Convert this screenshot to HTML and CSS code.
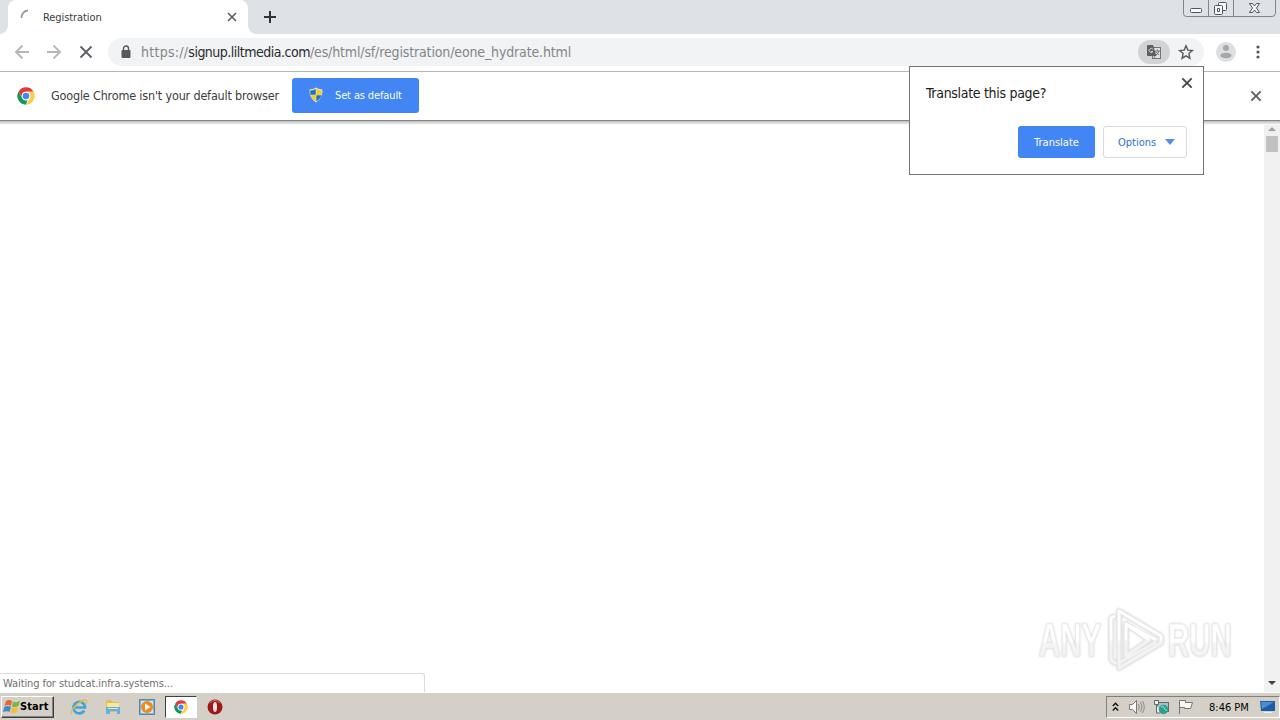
FILE: index.html
```html
<!DOCTYPE html>
<html lang="en">
<head>
<meta charset="utf-8">
<title>Registration</title>
<link rel="stylesheet" href="styles.css">
</head>
<body>
<svg class="defs" width="0" height="0" aria-hidden="true">
  <symbol id="cross" viewBox="0 0 12 12"><path d="M2 2l8 8M10 2l-8 8" fill="none" stroke="currentColor" stroke-width="1.6"/></symbol>
  <symbol id="chrome" viewBox="0 0 48 48">
    <circle cx="24" cy="24" r="23" fill="#fff"/>
    <path d="M4 12.500A23 23 0 0 1 44 12.500H24A11.500 11.500 0 0 0 14 29.700Z" fill="#de3d32"/>
    <path d="M4 12.500L14 29.700A11.500 11.500 0 0 0 28 34.800L24 47A23 23 0 0 1 4 12.500Z" fill="#15965a"/>
    <path d="M44 12.500A23 23 0 0 1 24 47L34 29.700A11.500 11.500 0 0 0 24 12.500Z" fill="#fccd48"/>
    <circle cx="24" cy="24" r="11.500" fill="#fff"/><circle cx="24" cy="24" r="8.800" fill="#4285f4"/>
  </symbol>
</svg>
<div class="screen">
  <header class="tabstrip">
    <div class="tab">
      <svg class="spinner" width="16" height="16" viewBox="0 0 16 16"><path d="M1.500 9A7 7 0 0 1 8 1.500" fill="none" stroke="#999" stroke-width="1.800"/></svg>
      <span class="tab-title">Registration</span>
      <svg class="tab-close" width="12" height="12"><use href="#cross"/></svg>
    </div>
    <svg class="plus" width="14" height="14" viewBox="0 0 14 14"><path d="M7 1v12M1 7h12" stroke="#30343a" stroke-width="2"/></svg>
    <div class="window-buttons">
      <svg width="96" height="18" viewBox="0 0 96 18">
        <path d="M1.500 0V13.500Q1.500 16.500 4.500 16.500H90Q93.500 16.500 93.500 13V0M26.500 0V16M51.500 0V16" fill="none" stroke="#7f858e"/>
        <g fill="#f7f8fa" stroke="#50565e"><rect x="8.500" y="8.500" width="11" height="4" rx="1"/><rect x="36.500" y="2.500" width="8" height="8" rx="1"/><rect x="32.500" y="5.500" width="8" height="9" rx="1"/><path d="M35.500 8.500h2v3h-2zM67.500 3.500h3l2 2.500 2-2.500h3L74.500 8l3 4.500h-3l-2-2.500-2 2.500h-3L70.500 8z"/></g>
      </svg>
    </div>
  </header>
  <nav class="toolbar">
    <svg class="nav-icons" width="84" height="16" viewBox="0 0 84 16" fill="none" stroke-width="1.800"><path d="M15 8H2M8.500 1.500L2 8L8.500 14.500" stroke="#b4b6ba"/><path d="M33 8h13M39.500 1.500L46 8L39.500 14.500" stroke="#b4b6ba"/><path d="M66.500 2.500l11 11M77.500 2.500l-11 11" stroke="#5b5f64"/></svg>
    <div class="omnibox">
      <svg class="lock" width="10" height="14" viewBox="0 0 10 14"><rect x=".5" y="5" width="9" height="8" rx="1" fill="#55595e"/><path d="M2.500 6V3.500a2.500 2.500 0 0 1 5 0V6" fill="none" stroke="#55595e" stroke-width="1.400"/></svg>
      <div class="url"><span class="scheme">https://</span><span class="host">signup.liltmedia.com</span><span class="path">/es/html/sf/registration/eone_hydrate.html</span></div>
      <div class="translate-chip">
        <svg width="16" height="16" viewBox="0 0 16 16"><rect x="6.500" y="3.500" width="8" height="11" fill="#e1e2e4" stroke="#717579"/><path d="M1 2q0-1 1-1h5l3.500 11H2q-1 0-1-1z" fill="#5c6065"/><path d="M7 5.500A2 2 0 1 0 7 7.500H5" fill="none" stroke="#d2d3d5"/><path d="M9 7h5M11.500 5.500V7M13 7q-1 3-3 4M10 8l3 3M8 12l1.500 2.500" fill="none" stroke="#717579"/></svg>
      </div>
      <svg class="star" width="16" height="16" viewBox="0 0 16 16"><path d="M8 1.800l1.800 4.300 4.600.4-3.500 3.100 1 4.600L8 11.800l-3.900 2.400 1-4.600-3.500-3.100 4.600-.4z" fill="none" stroke="#55595e" stroke-width="1.400"/></svg>
    </div>
    <svg class="avatar" width="20" height="20" viewBox="0 0 20 20"><circle cx="10" cy="10" r="10" fill="#dedfe0"/><circle cx="10" cy="6" r="3" fill="#a5a7a9"/><ellipse cx="10" cy="13.500" rx="5.500" ry="2.700" fill="#a5a7a9"/></svg>
    <svg class="menu" width="4" height="14" viewBox="0 0 4 14" fill="#53575c"><circle cx="2" cy="2" r="1.600"/><circle cx="2" cy="7" r="1.600"/><circle cx="2" cy="12" r="1.600"/></svg>
  </nav>
  <section class="infobar">
    <svg class="info-logo" width="18" height="18"><use href="#chrome"/></svg>
    <span class="info-text">Google Chrome isn't your default browser</span>
    <button class="default-button"><svg width="16" height="16" viewBox="0 0 16 16"><path d="M8 .5Q11 2.500 14.500 2.500Q15 11 8 15.500Q1 11 1.500 2.500Q5 2.500 8 .5Z" fill="#e9e4bd"/><path d="M7.700 2v5.700H2.300V3.500Q5 3.500 7.700 2ZM8.300 8.300h5.200Q12.500 12 8.300 14.300Z" fill="#2272b4"/><path d="M8.300 2v5.700h5.400V3.500Q11 3.500 8.300 2ZM7.700 8.300H2.500Q3.500 12 7.700 14.300Z" fill="#f5cd2c"/></svg><span>Set as default</span></button>
    <svg class="info-close" width="14" height="14"><use href="#cross"/></svg>
  </section>
  <main class="page">
    <div class="shadow"></div>
    <div class="watermark">
      <span class="wm-any">ANY</span>
      <svg width="60" height="68" viewBox="0 0 60 68" fill="none" stroke-linejoin="round"><defs><linearGradient id="fade" gradientUnits="userSpaceOnUse" x1="0" y1="5" x2="0" y2="62"><stop offset=".48" stop-color="#fff"/><stop offset=".55" stop-color="#f3f3f3"/></linearGradient></defs><g stroke="#e7e7e7" stroke-width="5"><path d="M13 5L55 30V37L13 62ZM20 18V50L43 34ZM9 10L5 12V54L10 58"/></g><g stroke="url(#fade)" stroke-width="2.800"><path d="M13 5L55 30V37L13 62ZM20 18V50L43 34ZM9 10L5 12V54L10 58M20 18L50 34M13 57L50 36"/></g></svg>
      <span class="wm-run">RUN</span>
    </div>
    <div class="status"><span>Waiting for studcat.infra.systems...</span></div>
    <div class="scrollbar"><svg width="8" height="5"><path d="M0 5L4 1L8 5Z" fill="#a0a0a0"/></svg><div class="thumb"></div><svg class="down" width="8" height="5"><path d="M0 0H8L4 4Z" fill="#404040"/></svg></div>
  </main>
  <footer class="taskbar">
    <button class="start"><svg width="18" height="16" viewBox="0 0 18 16"><path d="M3 2Q6 0 9 2L8 7Q5 5 1.500 7Z" fill="#e96335"/><path d="M10 2.500Q13 4 17 2L15.500 7Q12 9 9 7.500Z" fill="#77b943"/><path d="M1.200 8Q5 6 8 8L6.500 13Q4 11.500 0 13Z" fill="#3c8bd0"/><path d="M9 8.500Q12 10 15.200 8L14 13Q11 15 7.500 13.500Z" fill="#f6bd31"/></svg><span>Start</span></button>
    <div class="launchers">
      <svg width="18" height="18" viewBox="0 0 18 18"><path d="M14.200 12.500A5.800 5.800 0 1 1 15 9.500H5" fill="none" stroke="#41a3dc" stroke-width="2.600"/><path d="M2 16C-1 13 9 3 15 2Q18 2 15.500 6" fill="none" stroke="#e7b845" stroke-width="1.300"/></svg>
      <svg width="18" height="18" viewBox="0 0 18 18"><path d="M2 2h5l1 2h7v10H2z" fill="#e3bd55"/><path d="M3 5h12v5H3z" fill="#fbe795"/><path d="M2 9h14v7h-3v-3H6v3H2z" fill="#65b2d8"/><path d="M4 10h10v1H4z" fill="#c5e8f4"/></svg>
      <svg width="18" height="18" viewBox="0 0 18 18"><rect x="1.500" y="1.500" width="15" height="15" fill="#73b5df" stroke="#5688ad"/><path d="M3 3h12v12H3z" fill="#d9eaf2"/><circle cx="9" cy="9" r="6" fill="#f18a18"/><path d="M7 5.500v7L12.500 9z" fill="#fff"/></svg>
      <div class="active-app"><svg width="14" height="14"><use href="#chrome"/></svg></div>
      <svg class="opera" width="16" height="16" viewBox="0 0 16 16"><circle cx="8" cy="8" r="7.500" fill="#9f1717"/><path d="M3 4Q8-1 13 4" fill="none" stroke="#d76a6a"/><ellipse cx="8" cy="8" rx="2" ry="5" fill="#f2e9e7"/></svg>
    </div>
    <div class="tray">
      <svg class="chevrons" width="7" height="10" viewBox="0 0 7 10"><path d="M.8 4L3.500 1.300 6.200 4M.8 8.500L3.500 5.800 6.200 8.500" fill="none" stroke="#111" stroke-width="1.400"/></svg>
      <svg class="sound" width="17" height="16" viewBox="0 0 17 16"><path d="M1.500 5.500h3l4-4v13l-4-4h-3z" fill="#f8f8f6" stroke="#777"/><path d="M10.500 5Q12 8 10.500 11M12.500 3Q15.500 8 12.500 13M14.500 2Q18 8 14.500 14" fill="none" stroke="#888"/></svg>
      <svg class="network" width="17" height="16" viewBox="0 0 17 16"><rect x="4.500" y="3.500" width="11" height="9" fill="#9fc3c8" stroke="#616969"/><path d="M1.500 1.500h4v4h-4zM3.500 5v9h4" fill="#eee" stroke="#666"/><circle cx="10.500" cy="10.500" r="4.700" fill="#2ba08f"/><path d="M8 8.500q2-3 3 0t3 3" fill="none" stroke="#a6e1d7"/></svg>
      <svg class="flag" width="17" height="16" viewBox="0 0 17 16"><path d="M2.500 15V1.500h6v2h7l-2 6H7.500v-1h-5" fill="#f7f7f5" stroke="#77756f"/></svg>
      <time>8:46 PM</time>
      <svg class="desktop" width="16" height="14" viewBox="0 0 16 14"><path d="M0 1h15v10H1z" fill="#1c5da9"/><path d="M1 2h13L2 9z" fill="#4c8ecd"/><path d="M4 12h8v1H4z" fill="#e8eef1"/></svg>
    </div>
  </footer>
  <aside class="popup">
    <div class="popup-head"><span>Translate this page?</span><svg width="14" height="14"><use href="#cross"/></svg></div>
    <div class="popup-actions"><button class="translate-button"><span>Translate</span></button><button class="options-button"><span>Options</span><svg width="10" height="6"><path d="M0 0H10L5 6Z" fill="#4d90df"/></svg></button></div>
  </aside>
</div>
</body>
</html>
```
FILE: styles.css
```css
*{box-sizing:border-box}
body{margin:0;background:#fff;font-family:"DejaVu Sans Condensed","DejaVu Sans",sans-serif;font-stretch:condensed;font-size:11px;color:#3c3c3c;overflow:hidden}
svg{display:block;flex:none}
.defs{position:absolute}
span,time{white-space:nowrap}
button{font:inherit;border:0;padding:0;display:flex;align-items:center}
.screen{width:1280px;height:720px;display:flex;flex-direction:column;position:relative}
.tabstrip{height:34px;background:#dee1e6;display:flex;align-items:center;padding-left:8px;flex:none}
.tab{width:240px;height:34px;background:#fff;border-radius:8px 8px 0 0;display:flex;align-items:center;position:relative}
.tab::before,.tab::after{content:"";position:absolute;bottom:0;width:8px;height:8px}
.tab::before{left:-8px;background:radial-gradient(circle at 0 0,#dee1e6 7.5px,#fff 8px)}
.tab::after{right:-8px;background:radial-gradient(circle at 100% 0,#dee1e6 7.5px,#fff 8px)}
.spinner{margin-left:12px}
.tab-title{margin-left:7px;letter-spacing:-.08px}
.tab-close{margin-left:auto;margin-right:10px;color:#585b60}
.plus{margin-left:15px}
.window-buttons{margin-left:auto;align-self:flex-start;width:98px}
.toolbar{height:38px;flex:none;display:flex;align-items:center;border-bottom:1px solid #b3b5b7;padding:0 0 2px 14px}
.nav-icons{margin-right:10px}
.omnibox{width:1096px;height:28px;border-radius:14px;background:#f1f3f4;display:flex;align-items:center;padding-left:13px}
.url{font-size:14px;color:#82868a;margin-left:10px;display:flex}
.url .scheme{letter-spacing:.27px}
.url .host{color:#292b2f;letter-spacing:-.5px}
.url .path{letter-spacing:-.14px}
.translate-chip{width:32px;height:24px;border-radius:12px;background:#d2d3d5;margin-left:auto;display:flex;align-items:center;justify-content:center}
.star{margin:0 10px 0 8px}
.avatar{margin-left:12px}
.menu{margin-left:20px}
.infobar{height:49px;flex:none;display:flex;align-items:center;border-bottom:1px solid #858585;padding:0 17px}
.info-text{font-size:12.5px;margin-left:16px;width:241px;letter-spacing:-.18px;padding-bottom:2px}
.default-button{width:127px;height:35px;background:#4285f4;color:#fff;border-radius:3px;padding-left:16px;margin-bottom:2px}
.default-button span{margin-left:11px;letter-spacing:-.13px}
.info-close{margin-left:auto;color:#5c5f63}
.page{height:571px;flex:none;position:relative;display:flex;align-items:flex-end;background:#fff}
.shadow{position:absolute;top:0;left:0;right:0;height:4px;background:linear-gradient(#bbb,#fff);z-index:1}
.status{width:425px;height:19px;border:1px solid #dcdcdc;border-left:0;border-bottom:0;border-radius:0 3px 0 0;padding:3px 0 0 3px;color:#707070;letter-spacing:-.09px}
.scrollbar{width:16px;height:571px;background:#f1f1f1;margin-left:auto;display:flex;flex-direction:column;align-items:center;padding:5px 0 6px}
.thumb{width:12px;height:16px;background:#c1c1c1;margin-top:5px}
.down{margin-top:auto}
.watermark{position:absolute;left:1039px;top:485px;display:flex;align-items:center;font:bold 46px/68px "Liberation Sans",sans-serif;filter:drop-shadow(0 0 1px #ccc)}
.watermark span{width:110px;flex:none;color:transparent;background:linear-gradient(#fff 51%,#f4f4f4 56%);background-clip:text;-webkit-background-clip:text;-webkit-text-stroke:.5px #e4e4e4;transform-origin:left center;transform:scaleX(.64)}
.wm-any{margin-right:-43px}
.wm-run{margin-left:2px}
.taskbar{height:28px;flex:none;background:#d4d0c8;border-top:1px solid #fff;display:flex;align-items:center}
.start{width:53px;height:22px;margin-left:1px;border:1px solid;border-color:#fff #404040 #404040 #fff;box-shadow:inset -1px -1px #808080;background:#d4d0c8;color:#000;font-weight:bold;padding-left:1px}
.start span{letter-spacing:.1px;margin-left:-1px}
.launchers{display:flex;align-items:center;margin-left:16px;gap:16px}
.active-app{width:32px;height:22px;border:1px solid;border-color:#404040 #fff #fff #404040;background:#fff;display:flex;align-items:center;justify-content:center;margin:0 -6px 0 -7px}
.tray{margin-left:auto;width:174px;height:22px;border:1px solid;border-color:#808080 #fff #fff #808080;display:flex;align-items:center;padding-left:5px;color:#000}
.sound{margin-left:9px}.network{margin-left:8px}.flag{margin-left:7px}
.tray time{margin-left:15px;width:51px;padding-top:1px}
.popup{position:absolute;left:909px;top:66px;width:295px;height:109px;background:#fff;border:1px solid #737373;z-index:3;padding:9px 16px 16px}
.popup-head{display:flex;height:34px;justify-content:space-between;color:#202020;font-size:14px}
.popup-head span{margin-top:9px;letter-spacing:-.3px}
.popup-head svg{margin-right:-7px;color:#484848}
.popup-actions{display:flex;gap:8px;justify-content:flex-end;padding-top:16px}
.translate-button,.options-button{height:32px;border-radius:3px}
.translate-button{width:77px;background:#4285f4;color:#fff;justify-content:center}
.options-button{width:84px;border:1px solid #d8dade;background:#fff;color:#2f72cb;padding-left:14px}
.options-button svg{margin-left:auto;margin-right:11px}
```
